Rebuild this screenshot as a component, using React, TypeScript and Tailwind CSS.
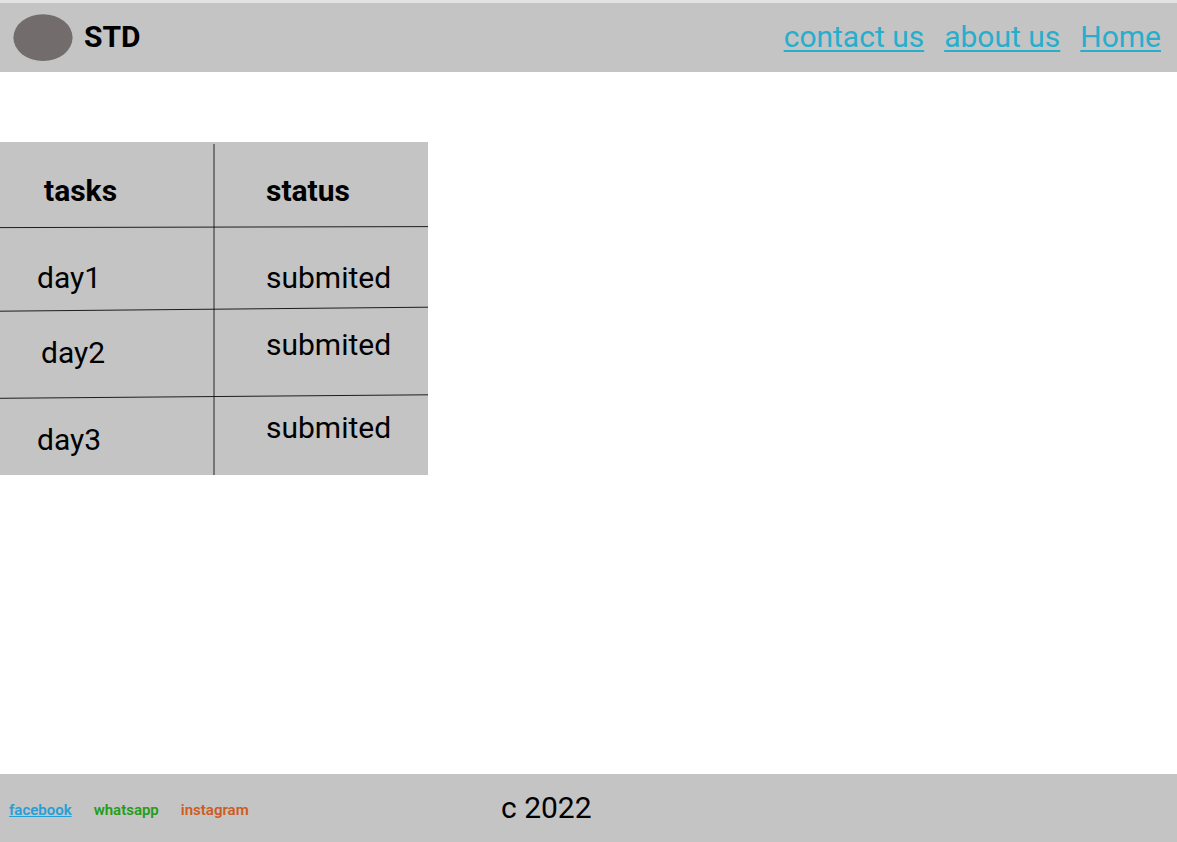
const navLinks = ["contact us", "about us", "Home"];

const rows = [
  { task: "day1", status: "submited", height: "h-[82px]", taskCell: "pl-[37px] pt-5", statusCell: "pt-5" },
  { task: "day2", status: "submited", height: "h-[87px]", taskCell: "pl-[41px]", statusCell: "pb-4" },
  { task: "day3", status: "submited", height: "h-[79px]", taskCell: "pl-[37px] pt-2", statusCell: "pb-4" },
];

function Header() {
  return (
    <header className="flex min-h-18 items-center justify-between border-t-3 border-[#e3e3e3] bg-[#c4c4c4] pr-4 pb-px pl-[13px]">
      <div className="flex items-center gap-[11px]">
        <svg viewBox="0 0 60 48" className="h-12 w-15" aria-hidden="true">
          <ellipse cx="30" cy="24.6" rx="29.6" ry="23.4" fill="#726c6c" />
        </svg>
        <h1 className="text-[30px] leading-9 font-bold">STD</h1>
      </div>
      <nav className="flex gap-5">
        {navLinks.map((label) => (
          <a key={label} href="#" className="text-[30px] leading-9 text-[#27aecd] underline decoration-2 underline-offset-3">
            {label}
          </a>
        ))}
      </nav>
    </header>
  );
}

function TaskTable() {
  return (
    <div className="relative w-[428px] max-w-full bg-[#c4c4c4]">
      <table className="w-full table-fixed border-collapse text-left text-[30px] leading-9">
        <thead>
          <tr className="h-[85px]">
            <th scope="col" className="pt-3 pl-11 font-bold">tasks</th>
            <th scope="col" className="pt-3 pl-[52px] font-bold">status</th>
          </tr>
        </thead>
        <tbody>
          {rows.map((row) => (
            <tr key={row.task} className={row.height}>
              <td className={row.taskCell}>{row.task}</td>
              <td className={`pl-[52px] ${row.statusCell}`}>{row.status}</td>
            </tr>
          ))}
        </tbody>
      </table>
      <svg
        viewBox="0 0 428 333"
        preserveAspectRatio="none"
        className="pointer-events-none absolute inset-0 size-full"
        stroke="#000"
        aria-hidden="true"
      >
        <path d="M0 85.6L428 84.6M0 169.2L428 165.2M0 256.3L428 252.8" strokeOpacity="0.85" />
        <path d="M214 2V333" strokeOpacity="0.8" />
      </svg>
    </div>
  );
}

function Footer() {
  return (
    <footer className="grid min-h-17 grid-cols-[501fr_676fr] items-center bg-[#c4c4c4]">
      <div className="flex gap-[22px] pt-1 pl-[9px] text-[15px] leading-5 font-semibold">
        <a href="#" className="text-[#259fd6] underline">facebook</a>
        <a href="#" className="text-[#259c16]">whatsapp</a>
        <a href="#" className="text-[#cf5b1e]">instagram</a>
      </div>
      <p className="text-[30px] leading-9">c 2022</p>
    </footer>
  );
}

export default function App() {
  return (
    <div className="flex min-h-screen flex-col bg-white font-['Roboto',sans-serif] text-black">
      <Header />
      <main className="grow pt-[70px] pb-8">
        <TaskTable />
      </main>
      <Footer />
    </div>
  );
}
